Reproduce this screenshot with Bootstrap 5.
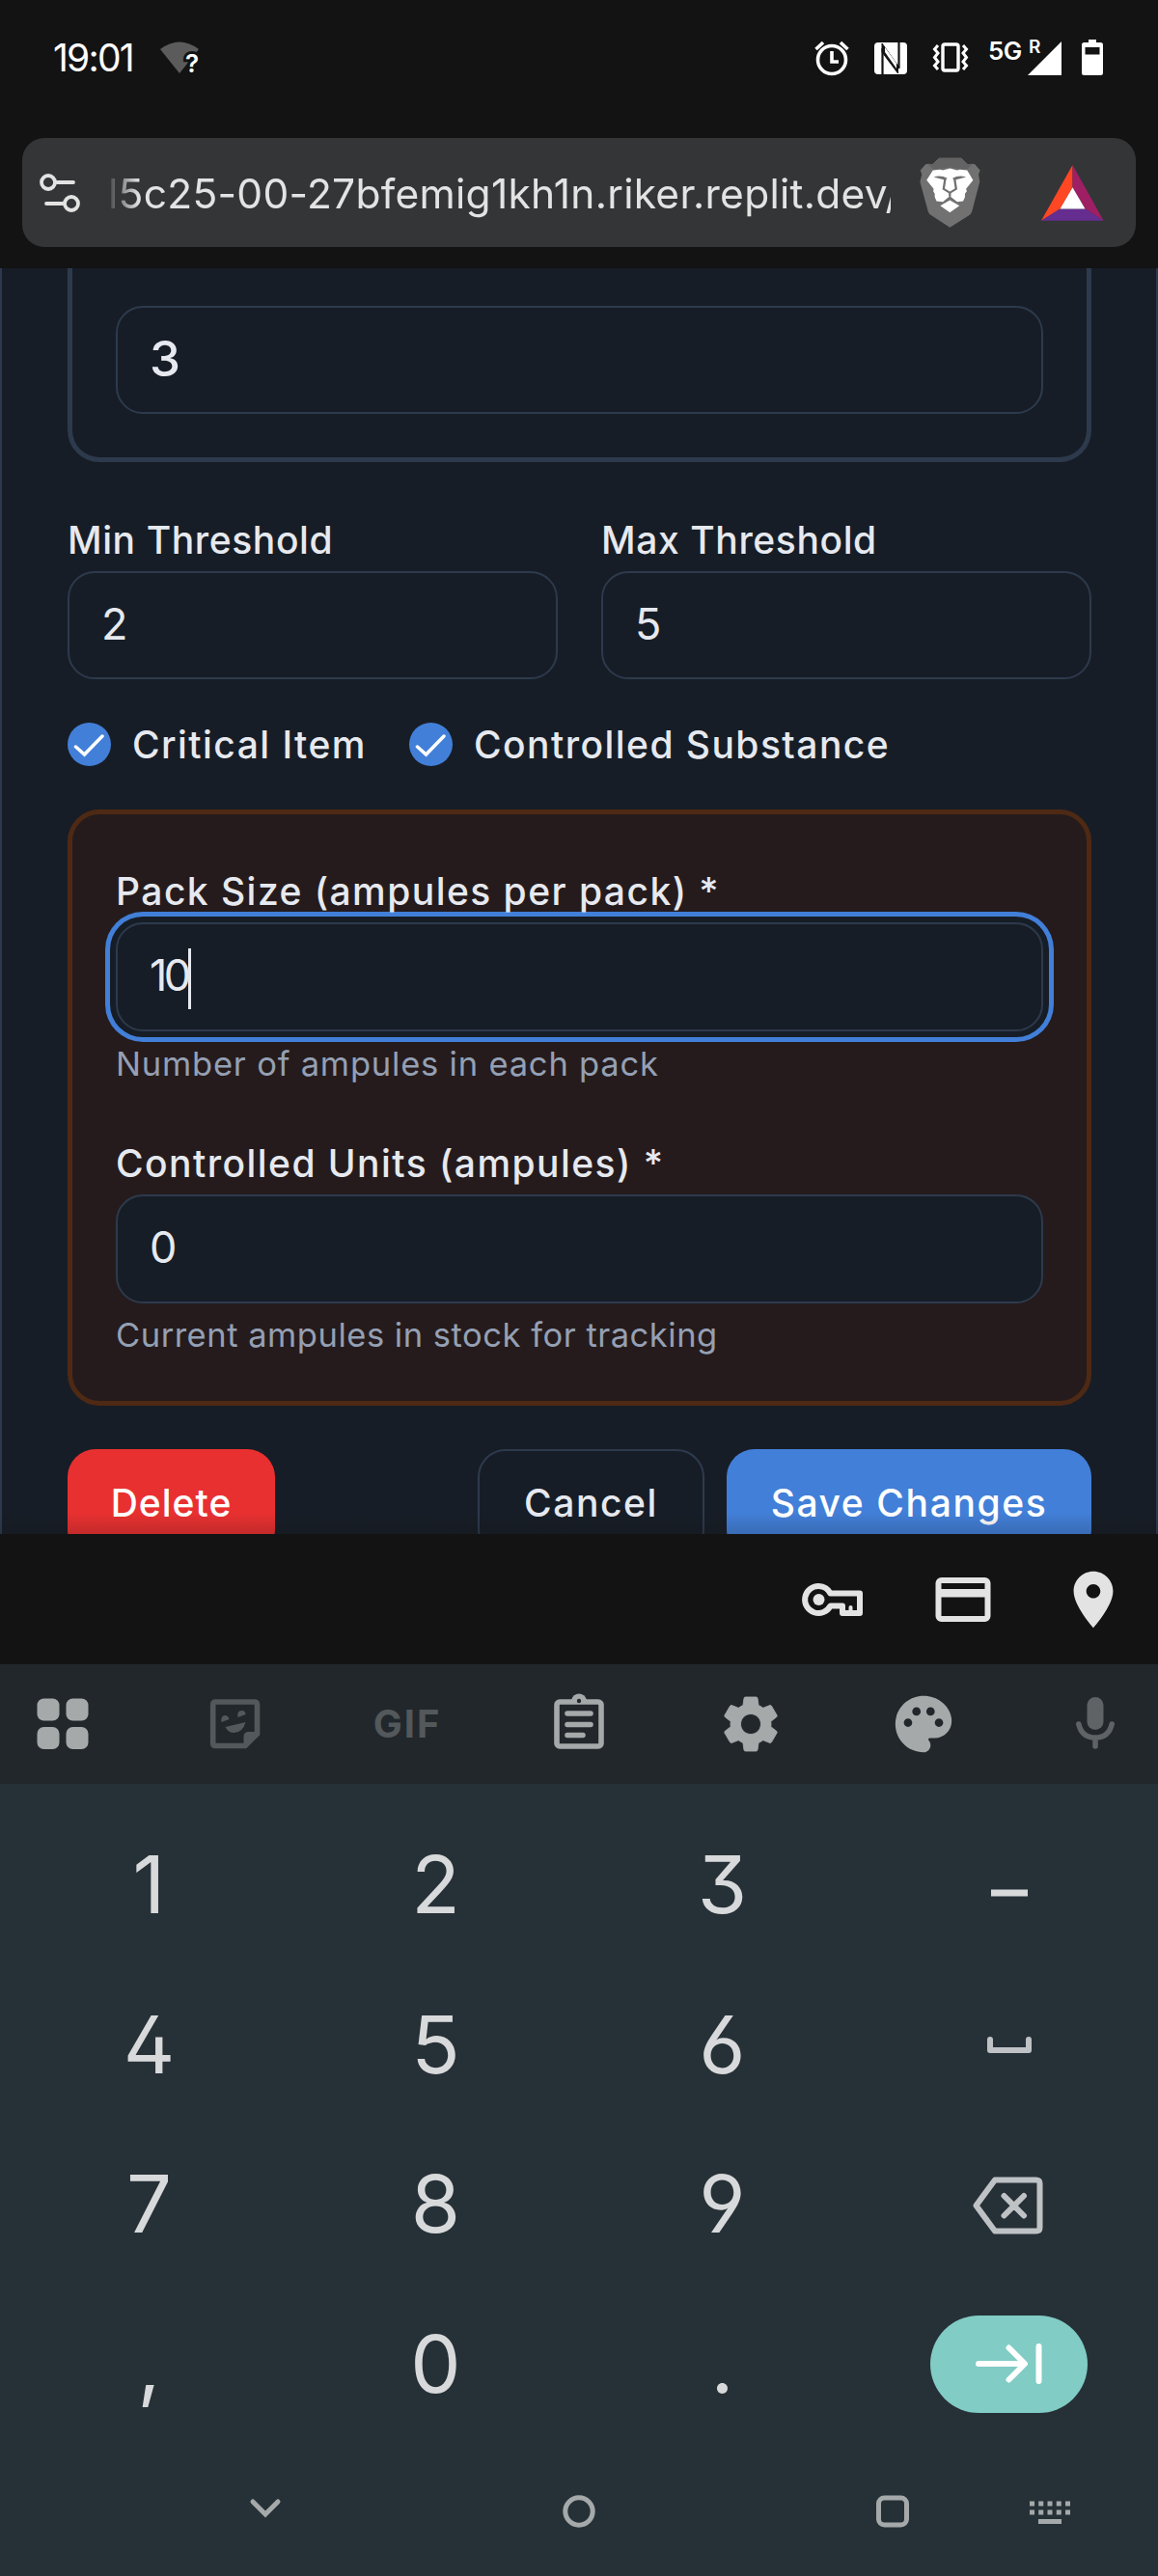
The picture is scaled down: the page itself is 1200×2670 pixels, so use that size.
<!DOCTYPE html>
<html lang="en" data-bs-theme="dark">
<head>
<meta charset="utf-8">
<title>Edit item</title>
<link href="https://cdn.jsdelivr.net/npm/bootstrap@5.3.0/dist/css/bootstrap.min.css" rel="stylesheet">
<style>
body{width:1200px;height:2670px;overflow:hidden;background:#131313;font-family:Inter,"Liberation Sans",sans-serif;color:#e6e9ef}
svg{display:block;flex:none;overflow:visible}
.status-strip{height:143px;padding:40px 57px 0 55px}
.clock{font-size:39px;line-height:40px;color:#fff;letter-spacing:-1.8px;width:111px;white-space:nowrap}
.net-type{font-size:26px;line-height:26px;font-weight:600;color:#fff;width:41px;letter-spacing:-.5px;white-space:nowrap}
.gap-a{margin-left:26px}
.gap-b{margin-left:20px}
.address{height:113px;margin:0 23px 22px;padding:0 33px 0 18px;border-radius:23px;background:#343537}
.address-text{width:811px;margin-left:29px;padding-top:2px;font-size:42.5px;line-height:60px;letter-spacing:.27px;color:#e3e3e3;white-space:nowrap;-webkit-mask-image:linear-gradient(90deg,rgba(0,0,0,.1),#000 32px)}
.lion{margin-left:30px}
.sheet-wrap{position:relative}
.sheet-wrap::after{content:"";position:absolute;left:0;right:0;bottom:0;height:22px;background:linear-gradient(transparent,rgba(19,19,19,.18))}
.sheet{height:1312px;padding:0 67px 0 68px;border:solid #2d3a4d;border-width:0 2px;background:#171d26}
.panel{border:5px solid #2d3a4d;border-radius:33px;padding:0 45px}
.panel-top{border-top:0;border-radius:0 0 33px 33px;height:201px;padding-top:39px}
.panel-warn{height:618px;margin-top:45px;border-color:#4e2914;background:#251b1c;padding-top:61px}
.field{height:112px;border:2px solid #2d3a4d;border-radius:28px;background:#171d26;color:#e6e9ef;font-size:45px;line-height:106px;padding:0 33px}
.field-strong{font-size:51px;font-weight:500}
.panel-warn .field{height:113px}
.thresholds{gap:45px;margin-top:62px}
.thresholds>div{flex:1 1 0}
.lbl{font-size:39px;line-height:37px;font-weight:500;letter-spacing:.6px;white-space:nowrap}
.lbl-gap{margin-bottom:14px}
.lbl-wide{letter-spacing:1.45px}
.lbl-next{margin-top:66px}
.hint{font-size:34.5px;line-height:36px;letter-spacing:.8px;color:#94a0b4;white-space:nowrap;margin-top:16px}
.hint-tight{letter-spacing:.52px;margin-top:15px}
.checks{margin-top:45px;height:45px}
.checks .lbl{margin-left:22px;padding-bottom:1px}
.check-first{width:287px}
.focused{position:relative;box-shadow:0 0 0 6px #171d26,0 0 0 11px #427fd8}
.tight{letter-spacing:-3.500px}
.caret{display:inline-block;width:3px;height:63px;background:#e6e9ef;vertical-align:middle}
.over{position:relative;z-index:1}
.actions{height:88px;overflow:hidden;margin-top:45px}
.act{height:112px;border-radius:29px;font-size:39px;font-weight:500;letter-spacing:1.6px;padding:0;line-height:111px;white-space:nowrap}
.act-delete{width:215px;background:#e93030;letter-spacing:1px}
.act-cancel{width:235px;border:2px solid #2d3a4d;color:#e6e9ef;line-height:107px}
.act-save{width:378px;margin-left:23px;background:#427fd8}
.fill-bar{height:135px;padding-right:32px;gap:65px}
.tools{height:124px;background:#22272b;padding:0 30px;color:#a5a9aa}
.gif{width:70px;font-size:40px;font-weight:700;letter-spacing:2px;color:#53585b;text-align:center}
.pad{background:#263137;height:821px;padding-top:22px;color:#d8d9db}
.pad-row{height:165.5px;padding:0 6px;font-size:83px;font-feature-settings:"ss01"}
.pad-row>div{width:297px;display:flex;justify-content:center;align-items:center;line-height:1}
.go{width:163px;height:101px;border-radius:51px;background:#81ccc5}
.navs{height:137px;padding:2px 0 0 258px;color:#a5a9aa}
.navs svg+svg{margin-left:291px}
.navs svg.kbd-icon{margin-left:125px}
</style>
<script src="https://cdn.jsdelivr.net/npm/bootstrap@5.3.0/dist/js/bootstrap.bundle.min.js"></script>
</head>
<body class="d-flex flex-column">

<div class="status-strip d-flex align-items-start">
  <div class="clock">19:01</div>
  <svg width="42" height="40" viewBox="166 40 42 40"><path d="M166 51Q186 36 206 51L186 76Z" fill="#5b5b5b"/><text x="192" y="75" font-size="26" font-weight="600" fill="#fff" stroke="#131313" stroke-width="6" paint-order="stroke">?</text></svg>
  <svg class="ms-auto" width="36" height="40" viewBox="843 40 36 40" fill="none" stroke="#fff" stroke-width="3.6"><circle cx="861" cy="62" r="14.5"/><path d="M861 53v11h7M844.500 51l7.500-7M877.500 51l-7.500-7"/></svg>
  <svg class="gap-a" width="34" height="40" viewBox="906 40 34 40"><rect x="906" y="44" width="34" height="33" rx="4" fill="#fff"/><path d="M914.500 50V77.500M931.500 71V43.500" fill="none" stroke="#131313" stroke-width="2.200"/><path d="M914 45L930.500 68V76L914 54Z" fill="#131313" stroke="#131313"/><path d="M917 54L929 71V65.500L917 49Z" fill="#fff"/></svg>
  <svg class="gap-a" width="38" height="40" viewBox="966 40 38 40" fill="none" stroke="#fff" stroke-width="3.400"><rect x="977" y="46" width="16" height="27" rx="2"/><path d="M972 47l-3.500 4 3.500 4-3.500 4.500 3.500 4.500-3.500 4 3.500 4M998 47l3.500 4-3.500 4 3.500 4.500-3.500 4.500 3.500 4-3.500 4" stroke-width="3"/></svg>
  <div class="net-type gap-b">5G</div>
  <svg width="36" height="40" viewBox="1066 40 36 40"><path d="M1066 78L1101 43V78Z" fill="#fff"/><text x="1067" y="55" font-size="19" font-weight="600" fill="#fff" stroke="#131313" stroke-width="5" paint-order="stroke">R</text></svg>
  <svg class="gap-b" width="22" height="40" viewBox="1121 40 22 40"><path d="M1128 44V41h8v3h4.500q2.500 0 2.500 2.500V75.500q0 2.500-2.500 2.500h-17q-2.500 0-2.500-2.500V46.500q0-2.500 2.500-2.500Z" fill="#fff"/><path d="M1124.500 49h15v7.500h-15Z" fill="#131313"/></svg>
</div>

<div class="address d-flex align-items-center">
  <svg width="42" height="42" viewBox="41 178 42 42" fill="none" stroke="#e3e3e3" stroke-width="3.800" stroke-linecap="round"><circle cx="50" cy="188" r="7"/><path d="M59 188H76M48 210H65"/><circle cx="74" cy="210" r="7"/></svg>
  <div class="address-text overflow-hidden">l5c25-00-27bfemig1kh1n.riker.replit.dev/</div>
  <svg class="lion" width="63" height="73" viewBox="922 492 165 218" preserveAspectRatio="none"><path d="M975 494H1035L1052 514Q1066 510 1072 514L1086 532 1082 545 1085 568 1064 660Q1062 668 1055 673L1004 709 955 673Q947 668 945 660L923 568 928 545 924 532 938 514Q945 510 957 514Z" fill="#717171"/><path d="M975 494H1035L1052 514 1066 514 1050 530 1004 524 960 530 944 514H957Z" fill="#636363"/><path d="M958 532L978 530 985 532 1004 526 1024 532 1031 530 1051 532 1067 563 1048 590 1050 597 1045 605V615L1040 628 1024 630 1004 612 985 630 968 628 963 615V605L959 597 960 590 941 563Z" fill="#fff"/><path d="M960 553Q980 546 997 557L992 563ZM1048 553Q1028 546 1011 557L1016 563Z" fill="#717171"/><path d="M991 560L987 590 1004 602 1021 590 1017 560M1004 602V614" fill="none" stroke="#717171" stroke-width="6"/><path d="M1004 625L1030 642 1004 663 978 642Z" fill="#fff"/></svg>
  <svg class="ms-auto" width="65" height="58" viewBox="1252 514 170 173" preserveAspectRatio="none"><path d="M1337 514V583L1303 650 1252 686Z" fill="#ff4724"/><path d="M1337 514V583L1371 650 1421 686Z" fill="#9e1f63"/><path d="M1252 686L1303 650H1371L1421 686Z" fill="#662d91"/><path d="M1337 583L1371 650H1303Z" fill="#fff"/></svg>
</div>

<div class="sheet-wrap">
<main class="sheet">
  <section class="panel panel-top"><div class="form-control field field-strong">3</div></section>
  <div class="d-flex thresholds">
    <div><div class="lbl lbl-gap">Min Threshold</div><div class="form-control field">2</div></div>
    <div><div class="lbl lbl-gap">Max Threshold</div><div class="form-control field">5</div></div>
  </div>
  <div class="checks d-flex align-items-center">
    <svg width="45" height="45" viewBox="0 0 45 45"><circle cx="22.500" cy="22.500" r="22.500" fill="#427fd8"/><path d="M8.500 25L17.500 33 36 14" fill="none" stroke="#fff" stroke-width="3.500" stroke-linecap="round"/></svg>
    <div class="lbl lbl-wide check-first">Critical Item</div>
    <svg width="45" height="45" viewBox="0 0 45 45"><circle cx="22.500" cy="22.500" r="22.500" fill="#427fd8"/><path d="M8.500 25L17.500 33 36 14" fill="none" stroke="#fff" stroke-width="3.500" stroke-linecap="round"/></svg>
    <div class="lbl lbl-wide">Controlled Substance</div>
  </div>
  <section class="panel panel-warn">
    <div class="lbl lbl-wide lbl-gap over">Pack Size (ampules per pack) *</div>
    <div class="form-control field focused"><span class="tight">10</span><span class="caret"></span></div>
    <div class="hint">Number of ampules in each pack</div>
    <div class="lbl lbl-wide lbl-gap lbl-next">Controlled Units (ampules) *</div>
    <div class="form-control field">0</div>
    <div class="hint hint-tight">Current ampules in stock for tracking</div>
  </section>
  <div class="actions d-flex align-items-start">
    <div class="btn act act-delete border-0 text-white">Delete</div>
    <div class="btn act act-cancel ms-auto">Cancel</div>
    <div class="btn act act-save border-0 text-white">Save Changes</div>
  </div>
</main>
</div>

<div class="fill-bar d-flex align-items-center justify-content-end">
  <svg width="70" height="70" viewBox="828.500 1623 70 70"><path d="M849 1644A14 14 0 1 0 861 1664.500H873.500V1672H891.500V1651.500H861A14 14 0 0 0 849 1644Z" fill="none" stroke="#e3e3e3" stroke-width="6" stroke-linejoin="round"/><circle cx="849" cy="1658" r="6" fill="#e3e3e3"/><path d="M882 1672V1666" stroke="#e3e3e3" stroke-width="4" stroke-linecap="round"/></svg>
  <svg width="70" height="70" viewBox="962.500 1623 70 70"><rect x="972" y="1638" width="51" height="40" rx="3" fill="none" stroke="#e3e3e3" stroke-width="6"/><path d="M972 1647H1023V1655.500H972Z" fill="#e3e3e3"/></svg>
  <svg width="70" height="70" viewBox="0 0 24 24" fill="#e3e3e3"><path d="M12 2C8.130 2 5 5.130 5 9c0 5.250 7 13 7 13s7-7.750 7-13c0-3.870-3.130-7-7-7zm0 9.500c-1.380 0-2.500-1.120-2.500-2.500s1.120-2.500 2.500-2.500 2.500 1.120 2.500 2.500-1.120 2.500-2.500 2.500z"/></svg>
</div>

<div class="tools d-flex align-items-center justify-content-between">
  <svg width="70" height="70" viewBox="29.500 1752 70 70" fill="currentColor"><rect x="38" y="1760.500" width="23" height="23" rx="7"/><rect x="68" y="1760.500" width="23" height="23" rx="7"/><rect x="38" y="1790" width="23" height="23" rx="7"/><rect x="68" y="1790" width="23" height="23" rx="7"/></svg>
  <svg width="70" height="70" viewBox="208.500 1752 70 70" fill="#53585b"><path d="M224 1764H264Q267 1764 267 1767V1797L254.500 1809.500H224Q221.200 1809.500 221.200 1806.700V1766.800Q221.200 1764 224 1764Z" fill="none" stroke="#53585b" stroke-width="5.600"/><path d="M253 1810V1800Q253 1795 258 1795H268L254 1811ZM230 1785Q229 1778 234 1778 237 1778 238 1782ZM247 1780Q246 1773 251 1773 255 1773 255 1777ZM234 1790L255 1785Q252 1796 243 1796 237 1796 234 1790Z"/></svg>
  <div class="gif">GIF</div>
  <svg width="70" height="70" viewBox="565 1752 70 70" fill="none" stroke="currentColor" stroke-width="5.600" stroke-linecap="round"><rect x="577" y="1764" width="46" height="46" rx="3"/><path d="M588 1776H612M588 1787.500H612M588 1798.500H604"/><path d="M592 1762Q594 1755.500 600 1755.500T608 1762L606 1766H594Z" fill="currentColor" stroke="none"/><circle cx="600" cy="1763" r="2.200" fill="#22272b" stroke="none"/></svg>
  <svg width="70" height="70" viewBox="0 0 24 24" fill="currentColor"><path stroke="currentColor" stroke-width=".3" stroke-linejoin="round" d="M19.140 12.940c.04-.3.060-.61.060-.94 0-.32-.02-.64-.07-.94l2.030-1.580c.18-.14.230-.41.120-.61l-1.920-3.320c-.12-.22-.37-.29-.59-.22l-2.390.96c-.5-.38-1.030-.7-1.620-.94l-.36-2.540c-.04-.24-.24-.41-.48-.41h-3.840c-.24 0-.43.170-.47.410l-.36 2.540c-.59.240-1.130.570-1.620.940l-2.390-.96c-.22-.08-.47 0-.59.220L2.740 8.870c-.12.210-.08.470.120.610l2.030 1.580c-.05.300-.09.630-.09.940s.02.640.07.940l-2.030 1.580c-.18.140-.23.410-.12.610l1.920 3.320c.12.220.370.290.590.220l2.390-.96c.5.380 1.030.700 1.620.940l.36 2.540c.05.240.240.410.480.410h3.840c.24 0 .44-.17.470-.41l.36-2.540c.59-.24 1.130-.56 1.620-.94l2.390.96c.22.080.470 0 .59-.22l1.920-3.320c.12-.22.070-.47-.12-.61l-2.010-1.580zM12 15.600c-1.980 0-3.600-1.620-3.600-3.600s1.620-3.600 3.600-3.600 3.600 1.620 3.600 3.600-1.620 3.600-3.600 3.600z"/></svg>
  <svg width="70" height="70" viewBox="0 0 24 24" fill="currentColor"><path d="M12 2C6.490 2 2 6.490 2 12s4.490 10 10 10c1.380 0 2.500-1.120 2.500-2.500 0-.61-.23-1.200-.64-1.670-.08-.1-.13-.21-.13-.33 0-.28.220-.5.500-.5H16c3.310 0 6-2.690 6-6 0-4.960-4.490-9-10-9zm5.500 11c-.83 0-1.500-.67-1.500-1.500s.67-1.500 1.500-1.500 1.500.67 1.500 1.500-.67 1.500-1.500 1.500zm-3-4c-.83 0-1.500-.67-1.500-1.500S13.670 6 14.500 6s1.500.67 1.500 1.500S15.330 9 14.500 9zM5 11.500c0-.83.670-1.500 1.500-1.500s1.500.67 1.500 1.500S7.330 13 6.500 13 5 12.330 5 11.500zm6-4c0 .83-.67 1.500-1.500 1.500S8 8.330 8 7.500 8.670 6 9.500 6s1.500.67 1.500 1.500z"/></svg>
  <svg width="70" height="70" viewBox="1100 1752 70 70" fill="#5f6366"><rect x="1126.500" y="1759" width="17" height="34" rx="8.500"/><path d="M1117.800 1787Q1121 1801 1135 1801T1152.200 1787M1135 1801V1810" fill="none" stroke="#5f6366" stroke-width="5.600" stroke-linecap="round"/></svg>
</div>

<div class="pad">
  <div class="pad-row d-flex"><div>1</div><div>2</div><div>3</div><div><svg width="38" height="40" viewBox="0 0 38 40"><path d="M0 24.500h38v7H0z" fill="currentColor"/></svg></div></div>
  <div class="pad-row d-flex"><div>4</div><div>5</div><div>6</div><div><svg width="46" height="20" viewBox="0 0 46 20" fill="none" stroke="#bfc2c5" stroke-width="6" stroke-linecap="round" stroke-linejoin="round"><path d="M3 5V16H43V5"/></svg></div></div>
  <div class="pad-row d-flex"><div>7</div><div>8</div><div>9</div><div><svg width="72" height="60" viewBox="1009.500 2255 72 60" fill="none" stroke="#bfc2c5" stroke-width="6" stroke-linecap="round" stroke-linejoin="round"><path d="M1011 2286L1030.500 2259.500H1073Q1077 2259.500 1077 2263V2309Q1077 2312.500 1073 2312.500H1030.500ZM1040 2276L1060.500 2296.500M1060.500 2276L1040 2296.500"/></svg></div></div>
  <div class="pad-row d-flex"><div>,</div><div>0</div><div>.</div><div><div class="go d-flex align-items-center justify-content-center"><svg width="70" height="44" viewBox="1011 2430 70 44" fill="none" stroke="#fff" stroke-width="6" stroke-linecap="round" stroke-linejoin="round"><path d="M1014 2452H1061M1045.500 2435.500L1062 2452 1045.500 2468.500M1076.500 2434V2470"/></svg></div></div></div>
  <div class="navs d-flex align-items-center">
    <svg width="34" height="34" viewBox="0 0 34 34" fill="none" stroke="currentColor" stroke-width="5" stroke-linecap="round"><path d="M4 7L17 20 30 7"/></svg>
    <svg width="34" height="34" viewBox="0 0 34 34" fill="none" stroke="currentColor" stroke-width="5"><circle cx="17" cy="17" r="14.200"/></svg>
    <svg width="34" height="34" viewBox="0 0 34 34" fill="none" stroke="currentColor" stroke-width="5"><rect x="2.500" y="3" width="29" height="28" rx="6"/></svg>
    <svg class="kbd-icon" width="42" height="34" viewBox="0 0 42 34" fill="none" stroke="currentColor" stroke-width="5"><path d="M0 9H42M0 18H42" stroke-dasharray="5 4.250"/><path d="M9 27.500H33"/></svg>
  </div>
</div>
</body>
</html>
